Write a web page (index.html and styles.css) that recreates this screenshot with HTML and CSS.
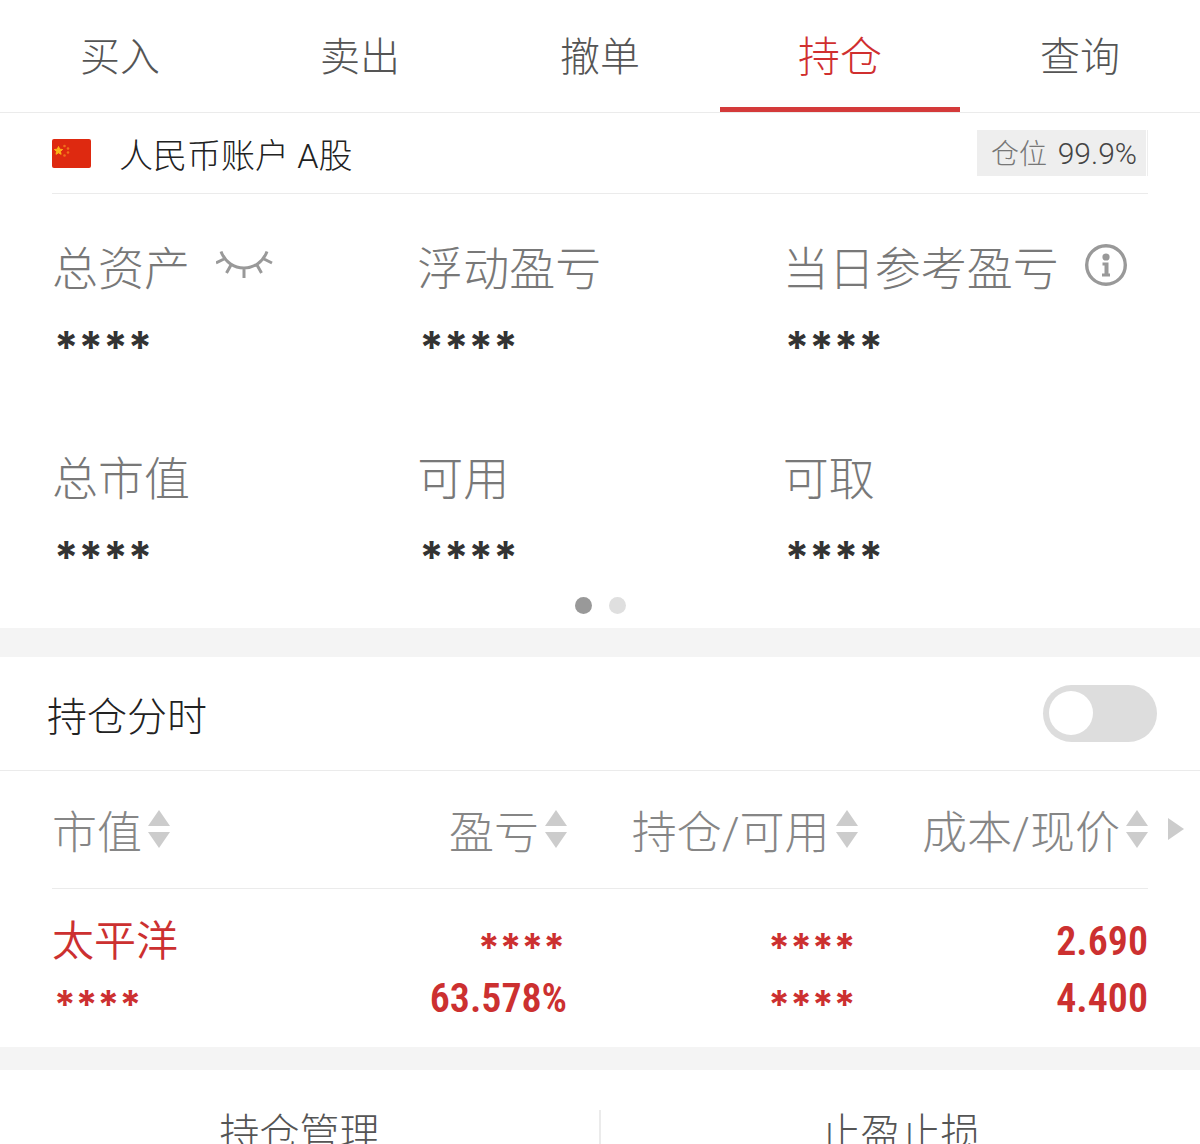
FILE: index.html
```html
<!DOCTYPE html>
<html lang="zh-CN">
<head>
<meta charset="utf-8">
<meta name="viewport" content="width=device-width, initial-scale=1">
<title>持仓</title>
<link rel="stylesheet" href="styles.css">
</head>
<body>
<nav class="tabs">
  <a class="tab" href="#buy">买入</a>
  <a class="tab" href="#sell">卖出</a>
  <a class="tab" href="#cancel">撤单</a>
  <a class="tab tab-active" href="#position" aria-current="page">持仓</a>
  <a class="tab" href="#query">查询</a>
</nav>

<main>
  <section class="account">
    <header class="account-head">
      <svg class="flag" viewBox="0 0 39 29" aria-hidden="true">
        <rect width="39" height="29" rx="2" fill="#de2910"/>
        <path d="M6.500 7.500l1.200 2.700 2.900.3-2.200 1.900.7 2.900-2.600-1.500-2.500 1.500.6-2.900-2.200-1.900 2.900-.3z" fill="#fbb417" stroke="#fbb417"/>
        <g fill="#f0701c"><circle cx="12.500" cy="7" r="1.300"/><circle cx="16" cy="9.500" r="1.300"/><circle cx="16" cy="13.500" r="1.300"/><circle cx="12.500" cy="16.500" r="1.300"/></g>
      </svg>
      <h1 class="account-name">人民币账户 A股</h1>
      <p class="badge">仓位 <span class="badge-value">99.9%</span></p>
    </header>

    <dl class="summary">
      <div class="item">
        <dt class="label">总资产
          <button class="icon-button" type="button" aria-label="显示金额">
            <svg width="58" height="30" viewBox="1 0 58 30" fill="none" stroke="#999" stroke-width="3" aria-hidden="true">
              <path d="M6 1.500C10 12 19 18 29 18S48 12 52 1.500M9 9L1 13M16 15l-4.500 8M29 18v10M42 15l4.500 8M49 9l8 4"/>
            </svg>
          </button>
        </dt>
        <dd class="stars">****</dd>
      </div>
      <div class="item"><dt class="label">浮动盈亏</dt><dd class="stars">****</dd></div>
      <div class="item">
        <dt class="label">当日参考盈亏
          <button class="icon-button" type="button" aria-label="说明">
            <svg width="42" height="42" viewBox="0 0 42 42" aria-hidden="true">
              <circle cx="21" cy="21" r="19.300" fill="none" stroke="#999" stroke-width="3.400"/>
              <circle cx="21" cy="13" r="3.600" fill="#999"/>
              <path d="M17.500 18.500h6v11h1.500v3h-8v-3h2.500v-8h-2z" fill="#999"/>
            </svg>
          </button>
        </dt>
        <dd class="stars">****</dd>
      </div>
      <div class="item"><dt class="label">总市值</dt><dd class="stars">****</dd></div>
      <div class="item"><dt class="label">可用</dt><dd class="stars">****</dd></div>
      <div class="item"><dt class="label">可取</dt><dd class="stars">****</dd></div>
    </dl>
    <div class="dots"><span class="dot dot-on"></span><span class="dot"></span></div>
  </section>

  <section class="holdings">
    <div class="switch-row">
      <label class="switch-label" for="intraday">持仓分时</label>
      <input class="switch" id="intraday" type="checkbox" role="switch">
    </div>

    <div class="table-wrap">
      <table class="table">
        <colgroup><col class="col-name"><col class="col-profit"><col class="col-num"><col class="col-num"></colgroup>
        <thead>
          <tr>
            <th scope="col"><button class="sort" type="button">市值<svg class="sort-icon" viewBox="0 0 22 38" aria-hidden="true"><path d="M11 0l11 16H0zM11 38L0 22h22z"/></svg></button></th>
            <th scope="col"><button class="sort" type="button">盈亏<svg class="sort-icon" viewBox="0 0 22 38" aria-hidden="true"><path d="M11 0l11 16H0zM11 38L0 22h22z"/></svg></button></th>
            <th scope="col"><button class="sort" type="button">持仓/可用<svg class="sort-icon" viewBox="0 0 22 38" aria-hidden="true"><path d="M11 0l11 16H0zM11 38L0 22h22z"/></svg></button></th>
            <th scope="col"><button class="sort" type="button">成本/现价<svg class="sort-icon" viewBox="0 0 22 38" aria-hidden="true"><path d="M11 0l11 16H0zM11 38L0 22h22z"/></svg></button></th>
          </tr>
        </thead>
        <tbody>
          <tr>
            <td><div class="stock">太平洋</div><div class="masked">****</div></td>
            <td><div class="masked">****</div><div class="number">63.578%</div></td>
            <td><div class="masked">****</div><div class="masked">****</div></td>
            <td><div class="number">2.690</div><div class="number">4.400</div></td>
          </tr>
        </tbody>
      </table>
      <button class="more" type="button" aria-label="更多列"><svg class="more-icon" viewBox="0 0 16 22" aria-hidden="true"><path d="M0 0l16 11L0 22z"/></svg></button>
    </div>
  </section>
</main>

<footer class="actions">
  <a class="action" href="#manage">持仓管理</a>
  <a class="action" href="#stop">止盈止损</a>
</footer>
</body>
</html>
```
FILE: styles.css
```css
* {
  box-sizing: border-box;
}

body {
  margin: 0;
  height: 100vh;
  overflow: hidden;
  background: #f4f4f4;
  color: #333;
  font-family: Roboto, "Noto Sans CJK SC", sans-serif;
  font-weight: 300;
}

h1,
p,
dl,
dd {
  margin: 0;
  font-weight: inherit;
}

a {
  color: inherit;
  text-decoration: none;
}

button {
  margin: 0;
  padding: 0;
  border: 0;
  background: none;
  color: inherit;
  font: inherit;
}

.tabs {
  display: flex;
  height: 113px;
  border-bottom: 1px solid #ebebeb;
  background: #fff;
}

.tab {
  display: flex;
  flex: 1;
  align-items: center;
  justify-content: center;
  border-bottom: 5px solid transparent;
  color: #555;
  font-size: 40px;
}

.tab-active {
  border-bottom-color: #d43a3a;
  color: #d02f2f;
  font-size: 42px;
}

.account {
  padding: 0 52px 14px;
  background: #fff;
}

.account-head {
  display: flex;
  align-items: center;
  height: 81px;
  border-bottom: 1px solid #ebebeb;
}

.flag {
  width: 39px;
  height: 29px;
}

.account-name {
  flex: 1;
  margin-left: 28px;
  color: #222;
  font-size: 34px;
}

.badge {
  height: 46px;
  padding: 0 11px 0 14px;
  background: #eee;
  box-shadow: inset -1px 0 #eee, inset -2px 0 #fff;
  color: #777;
  font-size: 28px;
  line-height: 48px;
}

.badge-value {
  margin-left: 4px;
  color: #444;
  font-size: 30px;
}

.summary {
  display: grid;
  grid-template-columns: repeat(3, 1fr);
  padding-top: 41px;
  row-gap: 67px;
}

.label {
  display: flex;
  align-items: center;
  gap: 26px;
  height: 60px;
  color: #787878;
  font-size: 46px;
  white-space: nowrap;
}

.icon-button,
.icon-button svg {
  display: block;
}

.stars {
  margin-top: 21px;
  padding-left: 2px;
  font: 700 44px/62px Inter, sans-serif;
}

.dots {
  display: flex;
  justify-content: center;
  gap: 17px;
  margin-top: 9px;
}

.dot {
  width: 17px;
  height: 17px;
  border-radius: 50%;
  background: #dfdfdf;
}

.dot-on {
  background: #999;
}

.holdings {
  margin-top: 29px;
  background: #fff;
}

.switch-row {
  display: flex;
  align-items: center;
  justify-content: space-between;
  height: 114px;
  padding: 0 43px 0 47px;
  border-bottom: 1px solid #ebebeb;
}

.switch-label {
  color: #222;
  font-size: 40px;
}

.switch {
  width: 114px;
  height: 57px;
  margin: 0;
  padding: 6px;
  border-radius: 29px;
  background: #ddd;
  appearance: none;
}

.switch::before {
  display: block;
  width: 44px;
  height: 44px;
  border-radius: 50%;
  background: #fff;
  content: "";
}

.switch:checked {
  background: #d43a3a;
}

.switch:checked::before {
  margin-left: auto;
}

.table-wrap {
  position: relative;
  padding: 0 52px 20px;
}

.table {
  width: 100%;
  border-collapse: collapse;
  table-layout: fixed;
}

.col-name {
  width: 21%;
}

.col-profit {
  width: 26%;
}

.table th {
  height: 117px;
  padding: 0;
  border-bottom: 1px solid #ebebeb;
  color: #868686;
  font-weight: 300;
  text-align: right;
}

.table td {
  padding: 24px 0 0;
  color: #cc3030;
  text-align: right;
  vertical-align: top;
}

.table th:first-child,
.table td:first-child {
  text-align: left;
}

.sort {
  display: inline-flex;
  align-items: center;
  gap: 6px;
  font-size: 45px;
  white-space: nowrap;
}

.sort-icon {
  width: 22px;
  height: 38px;
  fill: #ccc;
}

.more {
  position: absolute;
  top: 47px;
  right: 16px;
}

.more-icon {
  display: block;
  width: 16px;
  height: 22px;
  fill: #ccc;
}

.stock {
  font-size: 42px;
  font-weight: 350;
  line-height: 57px;
}

.masked {
  padding: 13px 2px 0;
  font: 700 39px/44px Inter, sans-serif;
}

.number {
  font: 600 40px/57px "Roboto Condensed", Roboto, sans-serif;
}

.actions {
  display: flex;
  margin-top: 23px;
  padding: 40px 0;
  background: #fff;
}

.action {
  flex: 1;
  color: #555;
  font-size: 40px;
  line-height: 48px;
  text-align: center;
}

.action + .action {
  border-left: 2px solid #ebebeb;
}
```
